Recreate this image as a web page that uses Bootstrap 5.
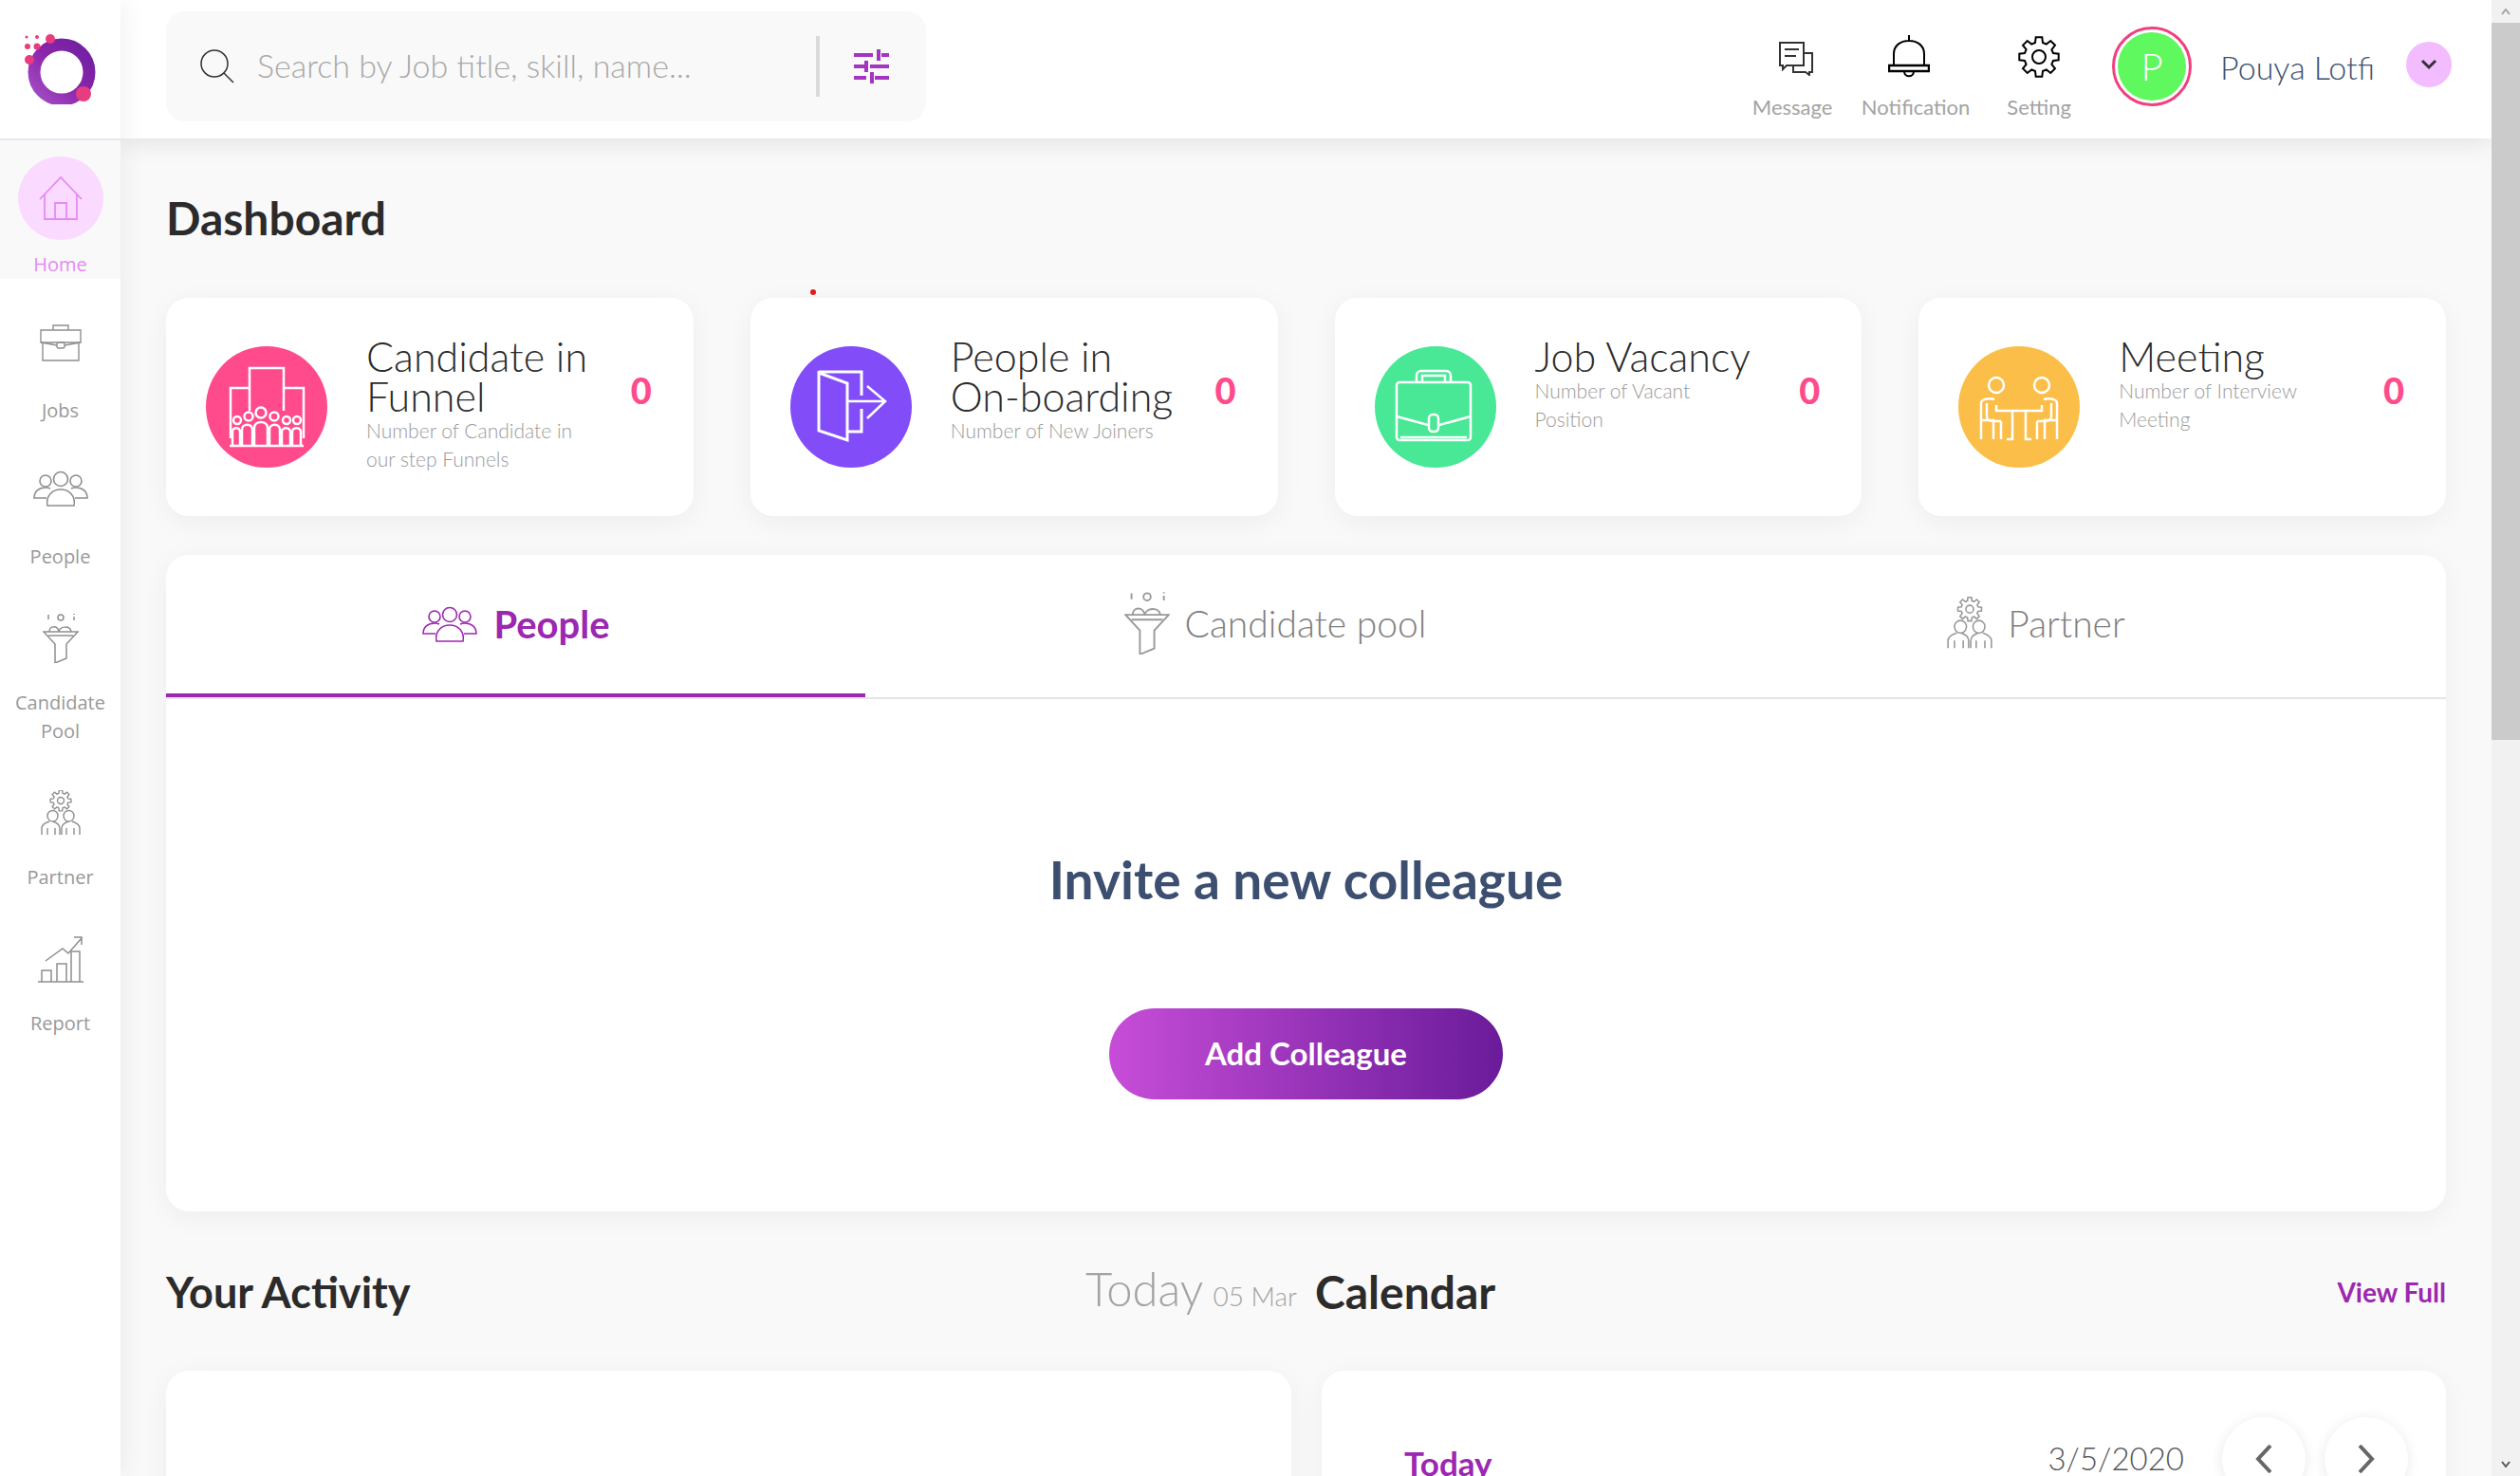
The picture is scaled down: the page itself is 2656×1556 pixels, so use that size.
<!DOCTYPE html>
<html lang="en">

<head>
    <meta charset="UTF-8">
    <title>Dashboard</title>
    <link href="https://cdn.jsdelivr.net/npm/bootstrap@5.3.0/dist/css/bootstrap.min.css" rel="stylesheet">
    <style>
        html, body { height: 100%; overflow: hidden; }
        body { background: #f9f9f9; font-family: "Lato", "Open Sans", sans-serif; color: #2b2b2b; }
        .app-shell { height: 1556px; }

        .side-rail { width: 127px; flex: none; background: #fff; box-shadow: 4px 0 24px rgba(0,0,0,.06); z-index: 3; font-family: "Open Sans", sans-serif; }
        .logo-box { height: 148px; flex: none; border-bottom: 2px solid #e3e8ef; }
        .rail-home { height: 146px; flex: none; background: #f9f9f9; padding-top: 17px; color: #e58af5; }
        .home-circle { width: 90px; height: 90px; border-radius: 50%; background: #fbdaff; }
        .rail-label { font-size: 20px; line-height: 30px; color: #999; text-align: center; }
        .rail-home .rail-label { color: #e58af5; margin-top: 11px; }
        .rail-item { padding-top: 22px; color: #8f8f8f; }
        .rail-icon { height: 90px; margin-bottom: 12px; }
        .rail-icon.nudge-down { margin-top: 4px; margin-bottom: 8px; }

        .main-col { min-width: 0; }
        .top-bar { height: 146px; flex: none; background: #fff; box-shadow: 0 4px 24px rgba(0,0,0,.1); padding: 12px 42px 0 48px; z-index: 2; }
        .search-box { width: 801px; height: 116px; background: #f9f9f9; border-radius: 20px; padding-left: 36px; }
        .search-text { font-size: 34px; font-weight: 300; color: #a8a8a8; width: 589px; margin: 0 0 4px 24px; flex: none; }
        .search-div { width: 4px; height: 64px; background: #dadada; flex: none; }
        .slider-icon { margin-left: 36px; }
        .tool-item { width: 130px; padding-top: 14px; text-align: center; color: #000; }
        .tool-icon { height: 72px; }
        .tool-icon.bell-shift { padding: 0 14px 4px 0; }
        .tool-label { font-size: 22px; line-height: 30px; color: #a3a3a3; font-weight: 400; }
        .user-block { padding-top: 16px; margin-left: 12px; }
        .avatar-ring { width: 84px; height: 84px; border: 3px solid #f0417f; border-radius: 50%; padding: 3px; }
        .avatar-fill { background: #5ff85f; color: #fff; border-radius: 50%; font-size: 40px; font-weight: 300; }
        .user-name { font-size: 34px; font-weight: 300; color: #3d5170; margin: 17px 33px 0 30px; }
        .user-caret { width: 48px; height: 48px; border-radius: 50%; background: #f3bcff; margin-top: 16px; }

        .page-body { padding: 60px 48px 0 48px; position: relative; }
        .page-title { font-size: 48px; line-height: 48px; font-weight: 700; margin: 0 0 60px; color: #2b2b2b; }
        .red-dot { position: absolute; left: 727px; top: 159px; width: 6px; height: 6px; border-radius: 50%; background: #e01b1b; }

        .stat-row { display: grid; grid-template-columns: repeat(4, 1fr); gap: 60px; }
        .stat-box { height: 230px; background: #fff; border-radius: 24px; box-shadow: 0 6px 30px rgba(0,0,0,.05); padding: 51px 42px 0; }
        .stat-disc { width: 128px; height: 128px; border-radius: 50%; flex: none; }
        .stat-copy { margin-left: 41px; margin-top: -10px; width: 270px; flex: none; }
        .stat-title { font-size: 43px; line-height: 42px; font-weight: 300; color: #2b2b2b; }
        .stat-note { font-size: 21px; line-height: 30px; font-weight: 300; color: #9a9a9a; }
        .stat-num { margin: 26px 2px 0 auto; font-size: 38px; line-height: 40px; font-weight: 900; color: #ff4b8b; }

        .tab-panel { margin-top: 41px; height: 692px; background: #fff; border-radius: 24px; box-shadow: 0 6px 30px rgba(0,0,0,.05); }
        .tab-strip { height: 152px; border-bottom: 2px solid #e5e5e5; }
        .tab-cell { height: 150px; font-size: 39px; font-weight: 300; color: #808080; gap: 16px; padding-bottom: 6px; }
        .tab-cell.is-on { width: 737px; font-size: 40px; font-weight: 700; color: #9c27b0; border-bottom: 4px solid #9c27b0; padding-bottom: 0; }
        .tab-wide { width: 864px; }
        .tab-end { width: 740px; }
        .tab-cell svg { color: #999; }
        .tab-cell.is-on svg { color: #9c27b0; }
        .invite-title { padding-top: 158px; font-size: 55px; line-height: 64px; font-weight: 700; color: #3c4f70; text-align: center; margin: 0; }
        .btn-invite { width: 415px; height: 96px; margin-top: 104px; border: 0; border-radius: 48px; color: #fff; font-size: 33px; font-weight: 700; background: linear-gradient(90deg, #c74dd8, #6a1b9a); }
        .btn-invite:hover { color: #fff; }

        .low-grid { display: grid; grid-template-columns: 1186px 1185px; gap: 32px; margin-top: 55px; }
        .low-title { font-size: 48px; line-height: 60px; font-weight: 700; margin: 0; color: #2b2b2b; }
        .low-title.is-tight { font-size: 45px; }
        .low-head { height: 60px; }
        .low-left { margin-right: -6px; }
        .low-right { margin-left: -7px; }
        .today-wrap { line-height: 60px; padding-top: 5px; }
        .today-big { font-size: 49px; font-weight: 300; color: #a3a3a3; }
        .today-small { font-size: 28px; font-weight: 300; color: #a3a3a3; margin-left: 6px; }
        .view-full { font-size: 28px; font-weight: 700; color: #9c27b0; text-decoration: none; }
        .low-card { height: 200px; margin-top: 53px; background: #fff; border-radius: 24px; box-shadow: 0 6px 30px rgba(0,0,0,.05); }
        .cal-head { padding: 49px 40px 0 87px; }
        .cal-today { font-size: 35px; font-weight: 700; color: #9c27b0; margin-top: 8px; }
        .cal-date { font-size: 33px; font-weight: 300; color: #555; margin-right: 40px; }
        .cal-nav { gap: 20px; }
        .cal-btn { width: 88px; height: 88px; border-radius: 50%; background: #fff; box-shadow: 0 2px 14px rgba(0,0,0,.09); border: 0; color: #666; }

        .fake-scroll { width: 30px; flex: none; background: #f1f1f1; z-index: 4; }
        .scroll-end { height: 24px; }
        .scroll-thumb { height: 756px; background: #cbcbcb; }
    </style>
</head>

<body>
    <!-- shared line icons -->
    <svg width="0" height="0" class="d-block position-absolute">
        <defs>
            <symbol id="ic-people" viewBox="0 0 58 38">
                <g fill="none" stroke="currentColor" stroke-width="1.6">
                    <circle cx="29" cy="9" r="7.5" />
                    <path d="M15 37c-2-10 5-17 14-17s16 7 14 17z" />
                    <circle cx="13" cy="11" r="6" />
                    <path d="M14 29H1c0-7 5-11 12-11 2 0 4 .5 5 1" />
                    <circle cx="45" cy="11" r="6" />
                    <path d="M44 29h13c0-7-5-11-12-11-2 0-4 .5-5 1" />
                </g>
            </symbol>
            <symbol id="ic-funnel" viewBox="0 0 38 52">
                <g fill="none" stroke="currentColor" stroke-width="1.5">
                    <path d="M6 1v5M33 3v4M33 0v1" />
                    <circle cx="19" cy="4" r="3" />
                    <path d="M7 19c0-7 9-7 10 0M17 19c1-6 12-7 13 0" />
                    <path d="M1 19h36L25 32v15l-12 5V32z" />
                    <path d="M6 23h26" />
                </g>
            </symbol>
            <symbol id="ic-partner" viewBox="0 0 42 48">
                <g fill="none" stroke="currentColor" stroke-width="1.4">
                    <path class="gear-path" data-cx="21" data-cy="11" data-ro="11" data-ri="8" />
                    <circle cx="21" cy="11" r="3.5" />
                    <path d="M7 27a5.500 5.500 0 1 1 11 0c0 3-2 6-5.500 6S7 30 7 27zM24 27a5.500 5.500 0 1 1 11 0c0 3-2 6-5.500 6S24 30 24 27z" />
                    <path d="M1 47v-7c0-4 5-6 8-7M20 47v-7c0-4-4-6-7-7M22 47v-7c0-4 4-6 7-7M41 47v-7c0-4-5-6-8-7M7 47v-7M15 47v-7M27 47v-7M35 47v-7" />
                </g>
            </symbol>
            <symbol id="ic-gear" viewBox="0 0 44 44">
                <path class="gear-path" data-cx="22" data-cy="22" data-ro="21" data-ri="15.500" fill="none" stroke="currentColor" stroke-width="2" />
                <circle cx="22" cy="22" r="7" fill="none" stroke="currentColor" stroke-width="2" />
            </symbol>
        </defs>
    </svg>

    <div class="app-shell d-flex">
        <aside class="side-rail d-flex flex-column">
            <div class="logo-box d-flex align-items-center justify-content-center">
                <svg width="76" height="74" viewBox="0 0 76 74">
                    <defs>
                        <linearGradient id="logoGrad" x1="0" y1="1" x2="1" y2="0">
                            <stop offset="0" stop-color="#a24fc4" />
                            <stop offset=".5" stop-color="#8c25ab" />
                            <stop offset="1" stop-color="#6c21a0" />
                        </linearGradient>
                    </defs>
                    <circle cx="39" cy="40" r="29" fill="none" stroke="url(#logoGrad)" stroke-width="13" />
                    <g fill="#e83c80">
                        <circle cx="27" cy="5" r="5" />
                        <circle cx="13" cy="13" r="3.500" />
                        <circle cx="3" cy="13" r="3" />
                        <circle cx="13" cy="3" r="2" />
                        <circle cx="2" cy="3" r="1.500" />
                        <circle cx="5" cy="27" r="5" />
                        <circle cx="62" cy="63" r="8" />
                    </g>
                </svg>
            </div>
            <div class="rail-home d-flex flex-column align-items-center">
                <div class="home-circle d-flex align-items-center justify-content-center">
                    <svg width="46" height="46" viewBox="0 0 46 46" fill="none" stroke="currentColor" stroke-width="1.8">
                        <path d="M1 24 23 1l22 23" />
                        <path d="M6 19v26h34V19" />
                        <path d="M17 45V28h12v17" />
                    </svg>
                </div>
                <div class="rail-label">Home</div>
            </div>
            <div class="rail-item">
                <div class="rail-icon d-flex align-items-center justify-content-center">
                    <svg width="44" height="40" viewBox="0 0 44 40" fill="none" stroke="currentColor" stroke-width="1.4">
                        <path d="M14 7V2h16v5M1 7h42v13H1zM3 20v19h38V20" />
                        <path d="M1 20l17 3M43 20l-17 3" />
                        <rect x="18" y="20" width="8" height="6" rx="2" />
                    </svg>
                </div>
                <div class="rail-label">Jobs</div>
            </div>
            <div class="rail-item">
                <div class="rail-icon d-flex align-items-center justify-content-center">
                    <svg width="58" height="38"><use href="#ic-people" /></svg>
                </div>
                <div class="rail-label">People</div>
            </div>
            <div class="rail-item">
                <div class="rail-icon nudge-down d-flex align-items-center justify-content-center">
                    <svg width="38" height="52"><use href="#ic-funnel" /></svg>
                </div>
                <div class="rail-label">Candidate<br>Pool</div>
            </div>
            <div class="rail-item">
                <div class="rail-icon nudge-down d-flex align-items-center justify-content-center">
                    <svg width="42" height="48"><use href="#ic-partner" /></svg>
                </div>
                <div class="rail-label">Partner</div>
            </div>
            <div class="rail-item">
                <div class="rail-icon nudge-down d-flex align-items-center justify-content-center">
                    <svg width="48" height="50" viewBox="0 0 48 50" fill="none" stroke="currentColor" stroke-width="1.5">
                        <path d="M0 49h48M4 49V37h10v12M20 49V30h10v19M35 49V17h9v32" />
                        <path d="M8 27l18-13 6 5L46 3M38 2h8v8" />
                    </svg>
                </div>
                <div class="rail-label">Report</div>
            </div>
        </aside>

        <div class="main-col flex-grow-1 d-flex flex-column">
            <header class="top-bar d-flex">
                <div class="search-box d-flex align-items-center">
                    <svg width="36" height="36" viewBox="0 0 36 36" fill="none" stroke="#333" stroke-width="1.5">
                        <circle cx="15" cy="15" r="14" />
                        <path d="M25 25l10 10" />
                    </svg>
                    <div class="search-text">Search by Job title, skill, name...</div>
                    <div class="search-div"></div>
                    <svg class="slider-icon" width="37" height="36" viewBox="0 0 37 36" fill="#a435c0">
                        <path d="M0 4h20v4H0zM29 4h8v4h-8zM24 0h4v12h-4zM0 16h11v4H0zM17 16h20v4H17zM11 12h4v12h-4zM0 28h13v4H0zM22 28h15v4H22zM17 24h4v12h-4z" />
                    </svg>
                </div>

                <div class="ms-auto d-flex">
                    <div class="tool-item">
                        <div class="tool-icon d-flex align-items-center justify-content-center ps-2">
                            <svg width="36" height="36" viewBox="0 0 36 36" fill="none" stroke="#333" stroke-width="2">
                                <path d="M1 1h25v24H8l-4 4v-4H1z" />
                                <path d="M6 8h15M6 15h12" />
                                <path d="M26 12h9v20h-3v3l-4-3H15v-7" />
                            </svg>
                        </div>
                        <div class="tool-label">Message</div>
                    </div>
                    <div class="tool-item">
                        <div class="tool-icon bell-shift d-flex align-items-center justify-content-center">
                            <svg width="44" height="46" viewBox="0 0 44 46" fill="none" stroke="#000" stroke-width="2">
                                <path d="M22 0v6M6 32V20C6 11 13 6 22 6s16 5 16 14v12" />
                                <rect x="1" y="32" width="42" height="6" stroke-width="2.500" />
                                <path d="M17 38c0 7 10 7 10 0" />
                            </svg>
                        </div>
                        <div class="tool-label">Notification</div>
                    </div>
                    <div class="tool-item">
                        <div class="tool-icon d-flex align-items-center justify-content-center pb-1">
                            <svg width="44" height="44"><use href="#ic-gear" /></svg>
                        </div>
                        <div class="tool-label">Setting</div>
                    </div>
                    <div class="user-block d-flex align-items-start">
                        <div class="avatar-ring">
                            <div class="avatar-fill w-100 h-100 d-flex align-items-center justify-content-center">P</div>
                        </div>
                        <div class="user-name">Pouya Lotfi</div>
                        <div class="user-caret d-flex align-items-center justify-content-center">
                            <svg width="18" height="12" viewBox="0 0 18 12" fill="none" stroke="#333" stroke-width="3"><path d="M2 2l7 7 7-7" /></svg>
                        </div>
                    </div>
                </div>
            </header>

            <main class="page-body flex-grow-1">
                <h1 class="page-title">Dashboard</h1>
                <span class="red-dot"></span>

                <div class="stat-row">
                    <div class="stat-box d-flex align-items-start">
                        <div class="stat-disc" style="background:#ff4b8b">
                            <svg width="128" height="128" viewBox="0 0 128 128" fill="none" stroke="#fff" stroke-width="2.500">
                                <path d="M46 68V23h36v45M46 44H26v53M82 44h21v53" />
                                <path d="M25 105h78M28 105V90c0-5 8-5 8 0v15M38 105V88c0-7 11-7 11 0v17M51 105V86c0-8 14-8 14 0v19M67 105V88c0-7 11-7 11 0v17M80 105V90c0-5 9-5 9 0v15M91 105V90c0-5 9-5 9 0v15" />
                                <circle cx="33" cy="78" r="4" /><circle cx="45" cy="74" r="4.500" /><circle cx="58" cy="70" r="5.500" /><circle cx="72" cy="74" r="4.500" /><circle cx="85" cy="78" r="4" /><circle cx="96" cy="78" r="4" />
                            </svg>
                        </div>
                        <div class="stat-copy">
                            <div class="stat-title">Candidate in<br>Funnel</div>
                            <div class="stat-note">Number of Candidate in<br>our step Funnels</div>
                        </div>
                        <div class="stat-num">0</div>
                    </div>
                    <div class="stat-box d-flex align-items-start">
                        <div class="stat-disc" style="background:#824cf9">
                            <svg width="128" height="128" viewBox="0 0 128 128" fill="none" stroke="#fff" stroke-width="3">
                                <path d="M30 28v61l30 10V39zM30 27h45v25M75 66v24H60" />
                                <path d="M60 58h40M81 42l19 16-19 18" stroke-width="2.500" />
                            </svg>
                        </div>
                        <div class="stat-copy">
                            <div class="stat-title">People in<br>On-boarding</div>
                            <div class="stat-note">Number of New Joiners</div>
                        </div>
                        <div class="stat-num">0</div>
                    </div>
                    <div class="stat-box d-flex align-items-start">
                        <div class="stat-disc" style="background:#48e896">
                            <svg width="128" height="128" viewBox="0 0 128 128" fill="none" stroke="#fff" stroke-width="2.500">
                                <path d="M44 38V31c0-3 2-5 5-5h26c3 0 5 2 5 5v7M50 38v-7h24v7" />
                                <rect x="23" y="38" width="78" height="61" rx="3" />
                                <path d="M23 74l33 9M101 74l-33 9" />
                                <rect x="57" y="72" width="10" height="18" rx="4" />
                                <path d="M27 96h70" />
                            </svg>
                        </div>
                        <div class="stat-copy">
                            <div class="stat-title">Job Vacancy</div>
                            <div class="stat-note">Number of Vacant<br>Position</div>
                        </div>
                        <div class="stat-num">0</div>
                    </div>
                    <div class="stat-box d-flex align-items-start">
                        <div class="stat-disc" style="background:#fbbe48">
                            <svg width="128" height="128" viewBox="0 0 128 128" fill="none" stroke="#fff" stroke-width="2.500">
                                <ellipse cx="40" cy="41" rx="8" ry="8" /><ellipse cx="88" cy="41" rx="8" ry="8" />
                                <path d="M24 98V78h13v20M24 78V60c0-4 8-6 14-4M104 98V78H91v20M104 78V60c0-4-8-6-14-4" />
                                <path d="M30 60v14c0 3 3 5 7 5h8M98 60v14c0 3-3 5-7 5h-8" />
                                <path d="M40 62v6h10M88 62v6H78M50 68h28M57 68v30h-6M71 68v30h6M45 79v19M83 79v19" />
                            </svg>
                        </div>
                        <div class="stat-copy">
                            <div class="stat-title">Meeting</div>
                            <div class="stat-note">Number of Interview<br>Meeting</div>
                        </div>
                        <div class="stat-num">0</div>
                    </div>
                </div>

                <section class="tab-panel">
                    <div class="tab-strip d-flex">
                        <div class="tab-cell is-on d-flex align-items-center justify-content-center">
                            <svg width="60" height="38"><use href="#ic-people" /></svg>People
                        </div>
                        <div class="tab-cell tab-wide d-flex align-items-center justify-content-center">
                            <svg width="48" height="66"><use href="#ic-funnel" /></svg>Candidate pool
                        </div>
                        <div class="tab-cell tab-end d-flex align-items-center justify-content-center">
                            <svg width="48" height="56"><use href="#ic-partner" /></svg>Partner
                        </div>
                    </div>
                    <h2 class="invite-title">Invite a new colleague</h2>
                    <div class="text-center">
                        <button class="btn btn-invite" type="button">Add Colleague</button>
                    </div>
                </section>

                <div class="low-grid">
                    <div>
                        <div class="low-head low-left d-flex align-items-center justify-content-between">
                            <h3 class="low-title is-tight">Your Activity</h3>
                            <div class="today-wrap"><span class="today-big">Today</span> <span class="today-small">05 Mar</span></div>
                        </div>
                        <div class="low-card"></div>
                    </div>
                    <div>
                        <div class="low-head low-right d-flex align-items-center justify-content-between">
                            <h3 class="low-title">Calendar</h3>
                            <a class="view-full" href="#">View Full</a>
                        </div>
                        <div class="low-card">
                            <div class="cal-head d-flex align-items-center">
                                <div class="cal-today">Today</div>
                                <div class="cal-date ms-auto">3/5/2020</div>
                                <div class="cal-nav d-flex">
                                    <button class="cal-btn d-flex align-items-center justify-content-center" type="button" aria-label="Previous">
                                        <svg width="20" height="32" viewBox="0 0 20 32" fill="none" stroke="currentColor" stroke-width="4"><path d="M17 2 4 16l13 14" /></svg>
                                    </button>
                                    <button class="cal-btn d-flex align-items-center justify-content-center" type="button" aria-label="Next">
                                        <svg width="20" height="32" viewBox="0 0 20 32" fill="none" stroke="currentColor" stroke-width="4"><path d="M3 2l13 14L3 30" /></svg>
                                    </button>
                                </div>
                            </div>
                        </div>
                    </div>
                </div>
            </main>
        </div>

        <div class="fake-scroll d-flex flex-column">
            <div class="scroll-end d-flex align-items-center justify-content-center">
                <svg width="10" height="8" viewBox="0 0 10 8" fill="none" stroke="#a3a3a3" stroke-width="2"><path d="M1 7l4-5 4 5" /></svg>
            </div>
            <div class="scroll-thumb"></div>
            <div class="scroll-end d-flex align-items-center justify-content-center mt-auto">
                <svg width="10" height="8" viewBox="0 0 10 8" fill="none" stroke="#555" stroke-width="2"><path d="M1 1l4 5 4-5" /></svg>
            </div>
        </div>
    </div>

    <script src="https://cdn.jsdelivr.net/npm/bootstrap@5.3.0/dist/js/bootstrap.bundle.min.js"></script>
    <script>
        // 8 tooth gear outline for the setting and partner icons
        document.querySelectorAll('.gear-path').forEach(p => {
            const cx = +p.dataset.cx, cy = +p.dataset.cy, ro = +p.dataset.ro, ri = +p.dataset.ri;
            const pts = [];
            for (let i = 0; i < 8; i++) {
                const a = i * 45;
                [[a - 15, ri], [a - 9, ro], [a + 9, ro], [a + 15, ri]].forEach(([deg, r]) => {
                    const t = (deg - 90) * Math.PI / 180;
                    pts.push((cx + r * Math.cos(t)).toFixed(1) + ' ' + (cy + r * Math.sin(t)).toFixed(1));
                });
            }
            p.setAttribute('d', 'M' + pts.join('L') + 'Z');
        });
    </script>
</body>

</html>
